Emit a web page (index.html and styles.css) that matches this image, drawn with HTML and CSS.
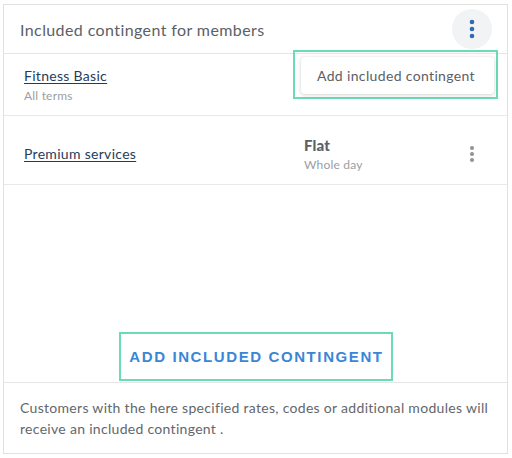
FILE: index.html
```html
<!DOCTYPE html>
<html>
<head>
<meta charset="utf-8">
<link rel="stylesheet" href="styles.css">
</head>
<body>
<div class="card">
  <div class="header">
    <span class="title">Included contingent for members</span>
    <button class="kebab kebab-active" aria-label="More">
      <svg width="6" height="20" viewBox="0 0 6 20"><circle cx="3" cy="3" r="2.3" fill="#2f6cb3"/><circle cx="3" cy="10" r="2.3" fill="#2f6cb3"/><circle cx="3" cy="17" r="2.3" fill="#2f6cb3"/></svg>
    </button>
  </div>
  <div class="row row1">
    <div class="name">
      <a class="link" href="#">Fitness Basic</a>
      <span class="sub">All terms</span>
    </div>
    <div class="rate"></div>
    <div class="kebab">
      <svg width="6" height="18" viewBox="0 0 6 18"><circle cx="3" cy="3" r="2" fill="#8f9296"/><circle cx="3" cy="9" r="2" fill="#8f9296"/><circle cx="3" cy="15" r="2" fill="#8f9296"/></svg>
    </div>
  </div>
  <div class="row row2">
    <div class="name">
      <a class="link" href="#">Premium services</a>
    </div>
    <div class="rate">
      <span class="rate-title">Flat</span>
      <span class="sub">Whole day</span>
    </div>
    <div class="kebab">
      <svg width="6" height="18" viewBox="0 0 6 18"><circle cx="3" cy="3" r="2" fill="#8f9296"/><circle cx="3" cy="9" r="2" fill="#8f9296"/><circle cx="3" cy="15" r="2" fill="#8f9296"/></svg>
    </div>
  </div>
  <div class="spacer"></div>
  <div class="actions">
    <button class="add-btn">ADD INCLUDED CONTINGENT</button>
  </div>
  <div class="footer">
    Customers with the here specified rates, codes or additional modules will receive an included contingent .
  </div>
  <div class="menu-focus">
    <div class="menu">Add included contingent</div>
  </div>
</div>
</body>
</html>
```
FILE: styles.css
```css
* { box-sizing: border-box; }
html, body { margin: 0; padding: 0; background: #fff; }
body {
  padding: 4px 0 0 3px;
  font-family: Lato, "Open Sans", sans-serif;
}
.card {
  position: relative;
  width: 505px;
  height: 450px;
  border: 1px solid #e1e1e1;
  display: flex;
  flex-direction: column;
}
.header {
  height: 49px;
  border-bottom: 1px solid #e6e6e6;
  display: flex;
  align-items: center;
  justify-content: space-between;
  padding: 0 15px 0 16px;
  flex: none;
}
.title {
  font-size: 16px;
  color: #5b6067;
  letter-spacing: 0.4px;
}
.kebab {
  width: 40px;
  height: 40px;
  border: none;
  background: transparent;
  padding: 0;
  display: flex;
  align-items: center;
  justify-content: center;
}
.kebab-active {
  border-radius: 50%;
  background: #f1f3f4;
}
.row {
  display: grid;
  grid-template-columns: 280px 148px 40px;
  align-items: center;
  padding-left: 20px;
  border-bottom: 1px solid #e8e8e8;
  flex: none;
}
.row1 { height: 62px; }
.row2 { height: 69px; padding-top: 7px; }
.name, .rate {
  display: flex;
  flex-direction: column;
}
.row1 .name { padding-top: 1px; }
.link {
  font-size: 14px;
  color: #1f3d5c;
  text-decoration: underline;
  text-underline-offset: 2px;
  letter-spacing: 0.3px;
}
.sub {
  font-size: 12px;
  color: #9a9ea3;
  margin-top: 4px;
  letter-spacing: 0.2px;
}
.rate-title {
  font-size: 15px;
  font-weight: 900;
  color: #5c6166;
  letter-spacing: 0.2px;
}
.rate .sub { margin-top: 3px; }
.spacer { flex: 1; }
.actions {
  display: flex;
  justify-content: center;
  padding-bottom: 1px;
  flex: none;
}
.add-btn {
  width: 274px;
  height: 49px;
  border: 2px solid #6adbb3;
  background: #fff;
  color: #3a86d6;
  font-family: "Liberation Sans", Arial, sans-serif;
  font-weight: bold;
  font-size: 15px;
  letter-spacing: 1.6px;
  padding: 0 0 0 1px;
  margin-left: 1px;
}
.footer {
  height: 71px;
  border-top: 1px solid #e6e6e6;
  padding: 14px 16px 0 16px;
  font-size: 14px;
  line-height: 21px;
  color: #62676d;
  letter-spacing: 0.3px;
  flex: none;
}
.menu-focus {
  position: absolute;
  left: 289px;
  top: 45px;
  width: 205px;
  height: 49px;
  border: 2px solid #6adbb3;
  padding: 4px;
}
.menu {
  width: 193px;
  height: 37px;
  margin-left: 2px;
  margin-top: 1px;
  background: #fff;
  border-radius: 3px;
  box-shadow: 0 1px 4px rgba(0,0,0,0.16), 0 0 1px rgba(0,0,0,0.12);
  font-size: 14px;
  color: #5b6067;
  display: flex;
  align-items: center;
  padding-left: 16px;
  letter-spacing: 0.35px;
}
```
